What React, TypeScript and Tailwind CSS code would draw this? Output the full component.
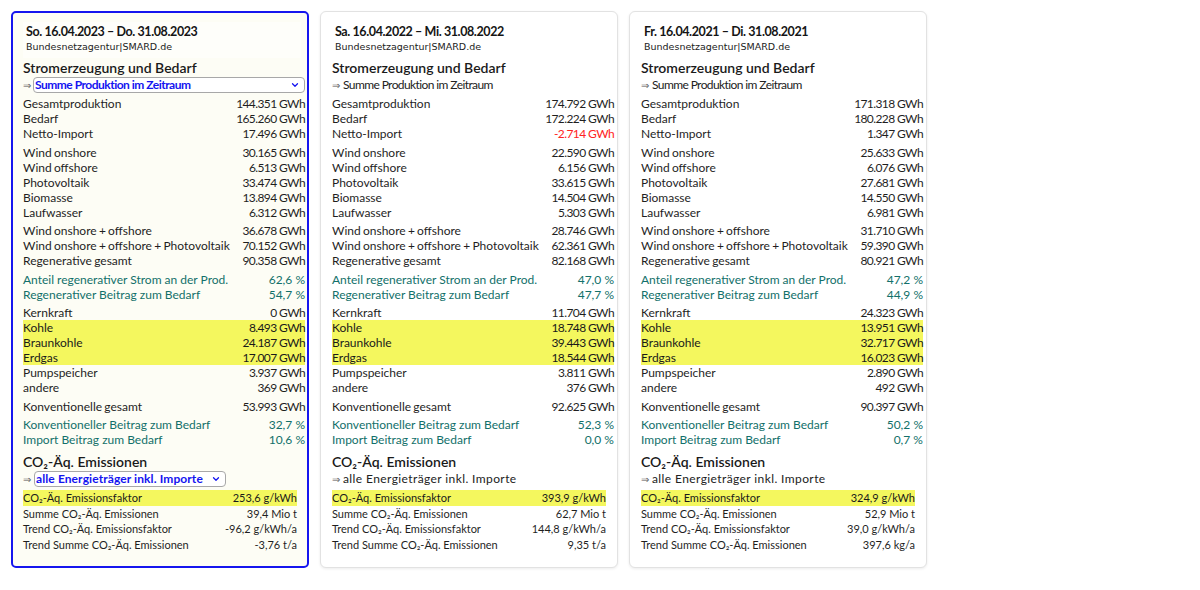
import React from "react";
import { ChevronDown } from "lucide-react";

type Kind = "n" | "teal" | "hl" | "red";
type R = [string, string, Kind?];

const FONT = "font-['Lato','Noto_Sans',sans-serif]";

function Row({ r, co2 }: { r: R; co2?: boolean }) {
  const [label, value, kind] = r;
  const rowCls =
    kind === "hl"
      ? "bg-[#f4f75e] text-[#1a1a1a]"
      : kind === "teal"
      ? "text-[#12706a]"
      : "text-[#1f1f1f]";
  const valTrack = co2 || kind === "teal" ? "" : "tracking-[-0.6px]";
  return (
    <div
      className={`flex justify-between ${
        co2 ? "leading-[15.5px] text-[11px]" : "leading-[15px] text-[12px]"
      } ${rowCls}`}
    >
      <span className={co2 || kind === "teal" ? "" : "[word-spacing:-0.8px]"}>{label}</span>
      <span className={`${valTrack} ${kind === "red" ? "text-[#ff2222]" : ""}`}>{value}</span>
    </div>
  );
}

function Group({ rows, first }: { rows: R[]; first?: boolean }) {
  return (
    <div className={first ? "" : "mt-[3.5px]"}>
      {rows.map((r, i) => (
        <Row key={i} r={r} />
      ))}
    </div>
  );
}

type CardData = {
  title: string;
  v: string[];
  co2: string[];
  netRed?: boolean;
};

function Card({ d, active }: { d: CardData; active?: boolean }) {
  const v = d.v.map((x) => (x.includes("%") ? x : x + " GWh"));
  const groups: R[][] = [
    [
      ["Gesamtproduktion", v[0]],
      ["Bedarf", v[1]],
      ["Netto-Import", v[2], d.netRed ? "red" : "n"],
    ],
    [
      ["Wind onshore", v[3]],
      ["Wind offshore", v[4]],
      ["Photovoltaik", v[5]],
      ["Biomasse", v[6]],
      ["Laufwasser", v[7]],
    ],
    [
      ["Wind onshore + offshore", v[8]],
      ["Wind onshore + offshore + Photovoltaik", v[9]],
      ["Regenerative gesamt", v[10]],
    ],
    [
      ["Anteil regenerativer Strom an der Prod.", v[11], "teal"],
      ["Regenerativer Beitrag zum Bedarf", v[12], "teal"],
    ],
    [
      ["Kernkraft", v[13]],
      ["Kohle", v[14], "hl"],
      ["Braunkohle", v[15], "hl"],
      ["Erdgas", v[16], "hl"],
      ["Pumpspeicher", v[17]],
      ["andere", v[18]],
    ],
    [["Konventionelle gesamt", v[19]]],
    [
      ["Konventioneller Beitrag zum Bedarf", v[20], "teal"],
      ["Import Beitrag zum Bedarf", v[21], "teal"],
    ],
  ];
  const co2: R[] = [
    ["CO₂-Äq. Emissionsfaktor", d.co2[0], "hl"],
    ["Summe CO₂-Äq. Emissionen", d.co2[1]],
    ["Trend CO₂-Äq. Emissionsfaktor", d.co2[2]],
    ["Trend Summe CO₂-Äq. Emissionen", d.co2[3]],
  ];

  const outer = active
    ? "border-2 border-[#1616ee] rounded-[5px] bg-[#fdfdf5] pl-[10px] pr-[2px] pt-[9px]"
    : "border border-[#e2e2e2] rounded-[6px] bg-white shadow-[0_1px_3px_rgba(0,0,0,0.08)] pl-[11px] pr-[3px] pt-[10px]";

  return (
    <div className={`w-[298px] h-[557px] shrink-0 ${outer} ${FONT} text-[12px]`}>
      <div className={`${active ? "bg-[#fefefa]" : ""} pl-[3px] pt-[2px] pb-[4px] mr-[4px]`}>
        <div className="text-[12.5px] font-bold tracking-[-0.4px] leading-[16px] text-[#151515]">
          {d.title}
        </div>
        <div className="font-['DejaVu_Sans',sans-serif] text-[9.5px] leading-[14px] text-[#222]">
          Bundesnetzagentur|SMARD.de
        </div>
      </div>
      <div className="mt-[1px] text-[14px] leading-[18px] font-semibold text-[#1a1a1a]">
        Stromerzeugung und Bedarf
      </div>
      {active ? (
        <div className="flex items-center h-[16px]">
          <span className="text-[10px] text-[#555] w-[10px]">⇒</span>
          <div className="flex-1 h-[16px] border border-[#a8a8a8] rounded-[4px] bg-white flex items-center justify-between px-[1px]">
            <span className="text-[12px] font-bold text-[#1414f0] tracking-[-0.5px] leading-[14px]">
              Summe Produktion im Zeitraum
            </span>
            <ChevronDown size={10} strokeWidth={3} className="text-[#1414f0] mr-[3px]" />
          </div>
        </div>
      ) : (
        <div className="flex items-center h-[16px] text-[12px] tracking-[-0.6px] text-[#222]">
          <span className="text-[10px] text-[#555] w-[11px] tracking-normal">⇒</span>
          <span>Summe Produktion im Zeitraum</span>
        </div>
      )}
      <div className="mt-[3px]">
        {groups.map((g, i) => (
          <Group key={i} rows={g} first={i === 0} />
        ))}
      </div>
      <div className="mt-[6px] text-[14px] leading-[18px] font-semibold text-[#1a1a1a]">
        CO₂-Äq. Emissionen
      </div>
      {active ? (
        <div className="flex items-center h-[16px]">
          <span className="text-[10px] text-[#555] w-[11px]">⇒</span>
          <div className="w-[192px] h-[16px] border border-[#a8a8a8] rounded-[4px] bg-white flex items-center justify-between px-[1px]">
            <span className="text-[12px] font-bold text-[#1414f0] leading-[14px] tracking-[0.1px]">
              alle Energieträger inkl. Importe
            </span>
            <ChevronDown size={10} strokeWidth={3} className="text-[#1414f0] mr-[3px]" />
          </div>
        </div>
      ) : (
        <div className="flex items-center h-[16px] text-[12px] tracking-[0.4px] text-[#222]">
          <span className="text-[10px] text-[#555] w-[11px] tracking-normal">⇒</span>
          <span>alle Energieträger inkl. Importe</span>
        </div>
      )}
      <div className="mt-[3px] mr-[8px]">
        {co2.map((r, i) => (
          <Row key={i} r={r} co2 />
        ))}
      </div>
    </div>
  );
}

const cards: CardData[] = [
  {
    title: "So. 16.04.2023 – Do. 31.08.2023",
    v: [
      "144.351", "165.260", "17.496",
      "30.165", "6.513", "33.474", "13.894", "6.312",
      "36.678", "70.152", "90.358",
      "62,6 %", "54,7 %",
      "0", "8.493", "24.187", "17.007", "3.937", "369",
      "53.993",
      "32,7 %", "10,6 %",
    ],
    co2: ["253,6 g/kWh", "39,4 Mio t", "-96,2 g/kWh/a", "-3,76 t/a"],
  },
  {
    title: "Sa. 16.04.2022 – Mi. 31.08.2022",
    netRed: true,
    v: [
      "174.792", "172.224", "-2.714",
      "22.590", "6.156", "33.615", "14.504", "5.303",
      "28.746", "62.361", "82.168",
      "47,0 %", "47,7 %",
      "11.704", "18.748", "39.443", "18.544", "3.811", "376",
      "92.625",
      "52,3 %", "0,0 %",
    ],
    co2: ["393,9 g/kWh", "62,7 Mio t", "144,8 g/kWh/a", "9,35 t/a"],
  },
  {
    title: "Fr. 16.04.2021 – Di. 31.08.2021",
    v: [
      "171.318", "180.228", "1.347",
      "25.633", "6.076", "27.681", "14.550", "6.981",
      "31.710", "59.390", "80.921",
      "47,2 %", "44,9 %",
      "24.323", "13.951", "32.717", "16.023", "2.890", "492",
      "90.397",
      "50,2 %", "0,7 %",
    ],
    co2: ["324,9 g/kWh", "52,9 Mio t", "39,0 g/kWh/a", "397,6 kg/a"],
  },
];

export default function App() {
  return (
    <div className="w-[1200px] h-[590px] bg-white flex gap-[11px] pl-[11px] pt-[11px]">
      {cards.map((c, i) => (
        <Card key={i} d={c} active={i === 0} />
      ))}
    </div>
  );
}
